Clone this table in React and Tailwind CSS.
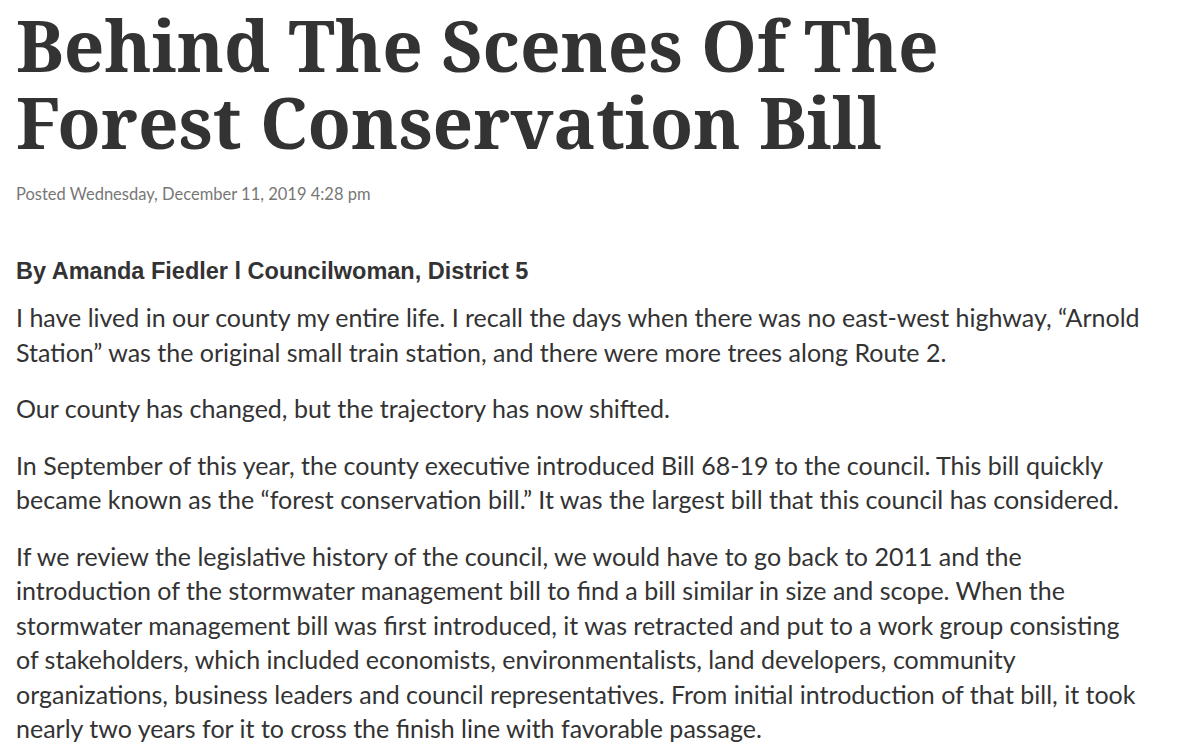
const paragraphs = [
  [
    "I have lived in our county my entire life. I recall the days when there was no east-west highway, \u201cArnold",
    "Station\u201d was the original small train station, and there were more trees along Route 2.",
  ],
  ["Our county has changed, but the trajectory has now shifted."],
  [
    "In September of this year, the county executive introduced Bill 68-19 to the council. This bill quickly",
    "became known as the \u201cforest conservation bill.\u201d It was the largest bill that this council has considered.",
  ],
  [
    "If we review the legislative history of the council, we would have to go back to 2011 and the",
    "introduction of the stormwater management bill to find a bill similar in size and scope. When the",
    "stormwater management bill was first introduced, it was retracted and put to a work group consisting",
    "of stakeholders, which included economists, environmentalists, land developers, community",
    "organizations, business leaders and council representatives. From initial introduction of that bill, it took",
    "nearly two years for it to cross the finish line with favorable passage.",
  ],
];

const ArticlePage = () => {
  return (
    <div className="min-h-screen bg-white px-4 pt-[6px] text-[#333333]">
      <h1 className="font-['Noto_Serif','DejaVu_Serif_Condensed',serif] text-[71px] font-bold leading-[77px] text-[#333333]">
        Behind The Scenes Of The
        <br />
        Forest Conservation Bill
      </h1>

      <div className="mt-[22px] font-['Lato','Open_Sans',sans-serif] text-[16.5px] leading-[24px] text-[#777777]">
        Posted Wednesday, December 11, 2019 4:28 pm
      </div>

      <article className="mt-[50px]">
        <h2 className="font-['Liberation_Sans',Arial,sans-serif] text-[23.5px] font-bold leading-[30px] text-[#333333]">
          By Amanda Fiedler l Councilwoman, District 5
        </h2>

        <div className="mt-[14px] flex flex-col gap-[22px] font-['Lato','Open_Sans',sans-serif] text-[25px] leading-[34.5px]">
          {paragraphs.map((lines, index) => (
            <p key={index} className="whitespace-nowrap">
              {lines.map((line, i) => (
                <span key={i}>
                  {line}
                  {i < lines.length - 1 && <br />}
                </span>
              ))}
            </p>
          ))}
        </div>
      </article>
    </div>
  );
};

export default function App() {
  return <ArticlePage />;
}
